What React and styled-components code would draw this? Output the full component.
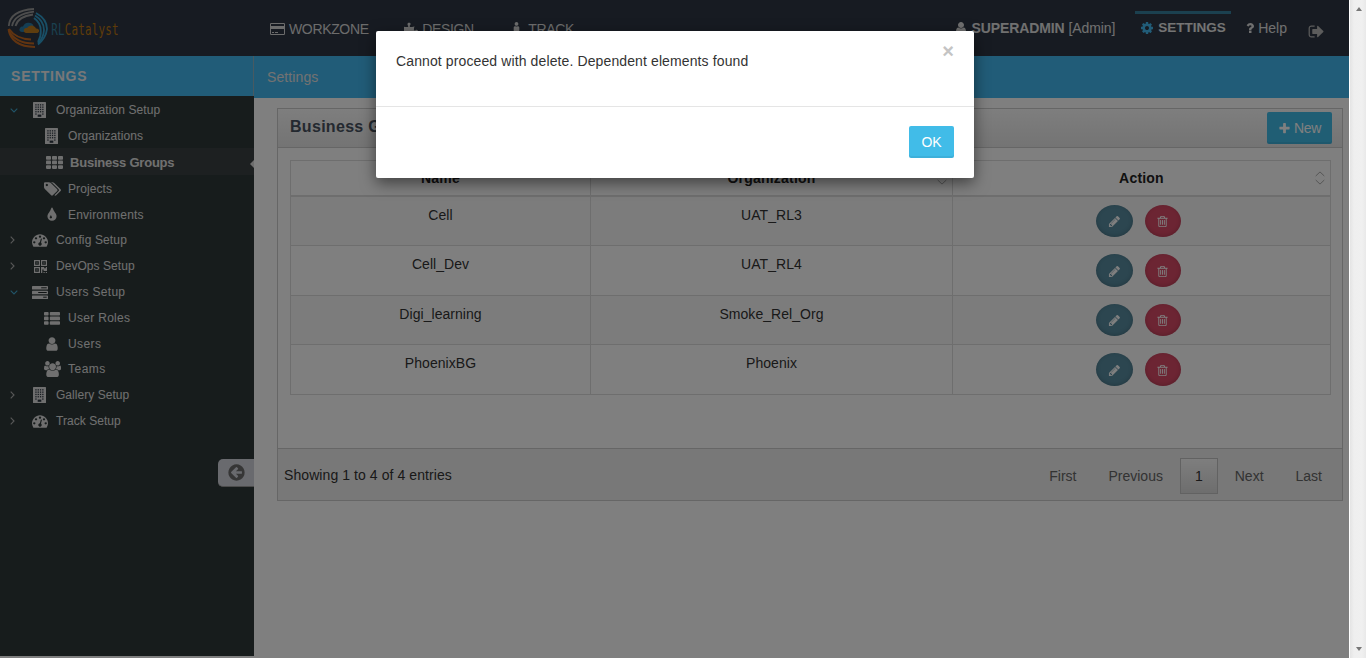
import React from "react";
import styled, { createGlobalStyle, css } from "styled-components";
import { FaPuzzlePiece, FaStreetView } from "react-icons/fa";

const GlobalStyle = createGlobalStyle`
  * { box-sizing: border-box; }
  html, body { margin: 0; padding: 0; height: 658px; overflow: hidden; background: #fff; }
  body { font-family: "Liberation Sans", Arial, sans-serif; font-size: 14px; line-height: 20px; color: #333; }
  button { font-family: inherit; }
`;

/* ---------- icons ---------- */
const Glyph = styled.svg`
  display: block;
  flex: none;
  fill: currentColor;
`;

const PATHS = {
  pencil: "M491 1536l91-91-235-235-91 91v107h128v128h107zm523-928q0-22-22-22-10 0-17 7l-542 542q-7 7-7 17 0 22 22 22 10 0 17-7l542-542q7-7 7-17zm-54-192l416 416-832 832h-416v-416zm683 96q0 53-37 90l-166 166-416-416 166-165q36-38 90-38 53 0 91 38l235 234q37 39 37 91z",
  trash: "M704 736v576q0 14-9 23t-23 9h-64q-14 0-23-9t-9-23v-576q0-14 9-23t23-9h64q14 0 23 9t9 23zm256 0v576q0 14-9 23t-23 9h-64q-14 0-23-9t-9-23v-576q0-14 9-23t23-9h64q14 0 23 9t9 23zm256 0v576q0 14-9 23t-23 9h-64q-14 0-23-9t-9-23v-576q0-14 9-23t23-9h64q14 0 23 9t9 23zm128 724v-948h-896v948q0 22 7 40.5t14.5 27 10.5 8.5h832q3 0 10.5-8.5t14.5-27 7-40.5zm-672-1076h448l-48-117q-7-9-17-11h-317q-10 2-17 11zm928 32v64q0 14-9 23t-23 9h-96v948q0 83-47 143.5t-113 60.5h-832q-66 0-113-58.5t-47-141.5v-952h-96q-14 0-23-9t-9-23v-64q0-14 9-23t23-9h309l70-167q15-37 54-63t79-26h320q40 0 79 26t54 63l70 167h309q14 0 23 9t9 23z",
  cog: "M1152 896q0-106-75-181t-181-75-181 75-75 181 75 181 181 75 181-75 75-181zm512-109v222q0 12-8 23t-20 13l-185 28q-19 54-39 91 35 50 107 138 10 12 10 25t-9 23q-27 37-99 108t-94 71q-12 0-26-9l-138-108q-44 23-91 38-16 136-29 186-7 28-36 28h-222q-14 0-24.5-8.5t-11.5-21.5l-28-184q-49-16-90-37l-141 107q-10 9-25 9-14 0-25-11-126-114-165-168-7-10-7-23 0-12 8-23 15-21 51-66.5t54-70.5q-27-50-41-99l-183-27q-13-2-21-12.5t-8-23.5v-222q0-12 8-23t19-13l186-28q14-46 39-92-40-57-107-138-10-12-10-24 0-10 9-23 26-36 98.5-107.5t94.5-71.5q13 0 26 10l138 107q44-23 91-38 16-136 29-186 7-28 36-28h222q14 0 24.5 8.5t11.5 21.5l28 184q49 16 90 37l142-107q9-9 24-9 13 0 25 10 129 119 165 170 7 8 7 22 0 12-8 23-15 21-51 66.5t-54 70.5q26 50 41 98l183 28q13 2 21 12.5t8 23.5z",
  signOut: "M704 1440q0 4 1 20t.5 26.5-3 23.5-10 19.5-20.5 6.5h-320q-119 0-203.5-84.5t-84.5-203.5v-704q0-119 84.5-203.5t203.5-84.5h320q13 0 22.5 9.5t9.5 22.5q0 4 1 20t.5 26.5-3 23.5-10 19.5-20.5 6.5h-320q-66 0-113 47t-47 113v704q0 66 47 113t113 47h312l11.5 1 11.5 3 8 5.5 7 9 2 13.5zm928-544q0 26-19 45l-544 544q-19 19-45 19t-45-19-19-45v-288h-448q-26 0-45-19t-19-45v-384q0-26 19-45t45-19h448v-288q0-26 19-45t45-19 45 19l544 544q19 19 19 45z",
  gauge: "M384 1152q0-53-37.5-90.5t-90.5-37.5-90.5 37.5-37.5 90.5 37.5 90.5 90.5 37.5 90.5-37.5 37.5-90.5zm192-448q0-53-37.5-90.5t-90.5-37.5-90.5 37.5-37.5 90.5 37.5 90.5 90.5 37.5 90.5-37.5 37.5-90.5zm428 481l101-382q6-26-7.5-48.5t-38.5-29.5-48 6.5-30 39.5l-101 382q-60 5-107 43.5t-63 98.5q-20 77 20 146t117 89 146-20 89-117q16-60-6-117t-72-91zm660-33q0-53-37.5-90.5t-90.5-37.5-90.5 37.5-37.5 90.5 37.5 90.5 90.5 37.5 90.5-37.5 37.5-90.5zm-640-640q0-53-37.5-90.5t-90.5-37.5-90.5 37.5-37.5 90.5 37.5 90.5 90.5 37.5 90.5-37.5 37.5-90.5zm448 192q0-53-37.5-90.5t-90.5-37.5-90.5 37.5-37.5 90.5 37.5 90.5 90.5 37.5 90.5-37.5 37.5-90.5zm320 448q0 261-141 483-19 29-54 29h-1402q-35 0-54-29-141-221-141-483 0-182 71-348t191-286 286-191 348-71 348 71 286 191 191 286 71 348z",
  tags: "M448 448q0-53-37.5-90.5t-90.5-37.5-90.5 37.5-37.5 90.5 37.5 90.5 90.5 37.5 90.5-37.5 37.5-90.5zm1067 576q0 53-37 90l-491 492q-39 37-91 37-53 0-90-37l-715-716q-38-37-64.5-101t-26.5-117v-416q0-52 38-90t90-38h416q53 0 117 26.5t102 64.5l715 714q37 39 37 91zm384 0q0 53-37 90l-491 492q-39 37-91 37-36 0-59-14t-53-45l470-470q37-37 37-90 0-52-37-91l-715-714q-38-38-102-64.5t-117-26.5h224q53 0 117 26.5t102 64.5l715 714q37 39 37 91z",
  tint: "M896 1152q0-36-20-69-1-1-15.5-22.5t-25.5-38-25-44-21-50.5q-4-16-21-16t-21 16q-7 23-21 50.5t-25 44-25.5 38-15.5 22.5q-20 33-20 69 0 53 37.5 90.5t90.5 37.5 90.5-37.5 37.5-90.5zm512-128q0 212-150 362t-362 150-362-150-150-362q0-145 81-275 6-9 62.5-90.5t101-151 99.5-178 83-201.5q9-30 34-47t51-17 51.5 17 33.5 47q28 93 83 201.5t99.5 178 101 151 62.5 90.5q81 127 81 275z",
  user: "M1536 1399q0 109-62.5 187t-150.5 78h-854q-88 0-150.5-78t-62.5-187q0-85 8.5-160.5t31.5-152 58.5-131 94-89 134.5-34.5q131 128 313 128t313-128q76 0 134.5 34.5t94 89 58.5 131 31.5 152 8.5 160.5zm-256-887q0 159-112.5 271.5t-271.5 112.5-271.5-112.5-112.5-271.5 112.5-271.5 271.5-112.5 271.5 112.5 112.5 271.5z",
  users: "M593 896q-162 5-265 128h-134q-82 0-138-40.5t-56-118.5q0-353 124-353 6 0 43.5 21t97.5 42.5 119 21.5q67 0 133-23-5 37-5 66 0 139 81 256zm1071 637q0 120-73 189.5t-194 69.5h-874q-121 0-194-69.5t-73-189.5q0-53 3.5-103.5t14-109 26.5-108.5 43-97.5 62-81 85.5-53.5 111.5-20q10 0 43 21.5t73 48 107 48 135 21.5 135-21.5 107-48 73-48 43-21.5q61 0 111.5 20t85.5 53.5 62 81 43 97.5 26.5 108.5 14 109 3.5 103.5zm-1024-1277q0 106-75 181t-181 75-181-75-75-181 75-181 181-75 181 75 75 181zm704 384q0 159-112.5 271.5t-271.5 112.5-271.5-112.5-112.5-271.5 112.5-271.5 271.5-112.5 271.5 112.5 112.5 271.5zm576 225q0 78-56 118.5t-138 40.5h-134q-103-123-265-128 81-117 81-256 0-29-5-66 66 23 133 23 59 0 119-21.5t97.5-42.5 43.5-21q124 0 124 353zm-128-609q0 106-75 181t-181 75-181-75-75-181 75-181 181-75 181 75 75 181z",
  back: "M1408 960v-128q0-26-19-45t-45-19h-502l189-189q19-19 19-45t-19-45l-91-91q-18-18-45-18t-45 18l-362 362-91 91q-18 18-18 45t18 45l91 91 362 362q18 18 45 18t45-18l91-91q18-18 18-45t-18-45l-189-189h502q26 0 45-19t19-45zm256-64q0 209-103 385.5t-279.5 279.5-385.5 103-385.5-103-279.5-279.5-103-385.5 103-385.5 279.5-279.5 385.5-103 385.5 103 279.5 279.5 103 385.5z",
  question: "M1088 1256v240q0 16-12 28t-28 12h-240q-16 0-28-12t-12-28v-240q0-16 12-28t28-12h240q16 0 28 12t12 28zm316-600q0 54-15.5 101t-35 76.5-55 59.5-57.5 43.5-61 35.5q-41 23-68.5 65t-27.5 67q0 17-12 32.5t-28 15.5h-240q-15 0-25.5-18.5t-10.5-37.5v-45q0-83 65-156.5t143-108.5q59-27 84-56t25-76q0-42-46.5-74t-107.5-32q-65 0-108 29-35 25-107 115-13 16-31 16-12 0-25-8l-164-125q-13-10-15.5-25t5.5-28q160-266 464-266 80 0 161 31t146 83 106 127.5 41 158.5z",
  plus: "M1600 736v192q0 40-28 68t-68 28h-416v416q0 40-28 68t-68 28h-192q-40 0-68-28t-28-68v-416h-416q-40 0-68-28t-28-68v-192q0-40 28-68t68-28h416v-416q0-40 28-68t68-28h192q40 0 68 28t28 68v416h416q40 0 68 28t28 68z",
};

const WIDE = { tags: 1920, users: 1920 };

function Icon({ name, size = 16 }) {
  const w = WIDE[name] || 1792;
  return (
    <Glyph width={(size * w) / 1792} height={size} viewBox={`0 0 ${w} 1792`}>
      <path d={PATHS[name]} />
    </Glyph>
  );
}

function BuildingIcon() {
  const windows = [];
  for (let r = 0; r < 5; r++)
    for (let c = 0; c < 4; c++)
      if (!(r === 4 && (c === 1 || c === 2)))
        windows.push(<rect key={`${r}-${c}`} x={2.3 + c * 2.3} y={2.2 + r * 2.3} width="1.3" height="1.3" fill="#2c3640" />);
  return (
    <Glyph width="13" height="16" viewBox="0 0 13 16">
      <rect width="13" height="16" rx=".6" />
      {windows}
      <rect x="4.7" y="12.6" width="3.6" height="2.2" fill="#2c3640" />
    </Glyph>
  );
}

function ThIcon() {
  return (
    <Glyph width="17" height="13" viewBox="0 0 17 13">
      {[0, 4.6, 9.2].map((y) => [0, 6, 12].map((x) => <rect key={`${x}-${y}`} x={x} y={y} width="5" height="3.7" rx=".8" />))}
    </Glyph>
  );
}

function ThListIcon() {
  return (
    <Glyph width="16" height="13" viewBox="0 0 16 13">
      {[0, 4.6, 9.2].map((y) => (
        <g key={y}>
          <rect y={y} width="4.6" height="3.6" rx=".8" />
          <rect x="5.8" y={y} width="10.2" height="3.6" rx=".8" />
        </g>
      ))}
    </Glyph>
  );
}

function ServerIcon() {
  return (
    <Glyph width="16" height="13" viewBox="0 0 16 13">
      {[0, 4.7, 9.4].map((y) => <rect key={y} y={y} width="16" height="3.6" rx=".6" />)}
      <g fill="#232b2b">
        <rect x="9.2" y="1.3" width="5.5" height="1" />
        <rect x="6.2" y="6" width="8.5" height="1" />
        <rect x="11.2" y="10.7" width="3.5" height="1" />
      </g>
    </Glyph>
  );
}

function QrIcon() {
  return (
    <Glyph width="13" height="13" viewBox="0 0 13 13">
      <path fillRule="evenodd" d="M0 0h6v6H0zM1.2 1.2v3.6h3.6V1.2zM7 0h6v6H7zM8.2 1.2v3.6h3.6V1.2zM0 7h6v6H0zM1.2 8.2v3.6h3.6V8.2zM2.4 2.4h1.2v1.2H2.4zM9.4 2.4h1.2v1.2H9.4zM2.4 9.4h1.2v1.2H2.4zM7 7h3.2v1.2h1.6V7H13v4h-3.4V9.6H8.3V13H7zM9.5 12h1.2v1H9.5zM11.8 12H13v1h-1.2z" />
    </Glyph>
  );
}

function CardIcon() {
  return (
    <Glyph width="15" height="12" viewBox="0 0 15 12">
      <path fillRule="evenodd" d="M1.2 0h12.6Q15 0 15 1.2v9.6Q15 12 13.800 12H1.200Q0 12 0 10.800V1.200Q0 0 1.200 0zM1 1v2h13V1zM1 6v5h13V6z" />
      <path d="M2 9h2v1H2zM5 9h3v1H5z" />
    </Glyph>
  );
}

const Stroke = styled.svg`
  display: block;
  flex: none;
  fill: none;
  stroke: currentColor;
`;

function Chevron({ open }) {
  return open ? (
    <Stroke width="8" height="5" viewBox="0 0 8 5"><path d="M.7.7 4 4 7.300.7" strokeWidth="1.100" /></Stroke>
  ) : (
    <Stroke width="5" height="8" viewBox="0 0 5 8"><path d="M.7.7 4 4 .7 7.300" strokeWidth="1.100" /></Stroke>
  );
}

function SortIcon() {
  return (
    <Stroke width="10" height="14" viewBox="0 0 10 14"><path d="M.7 5 5 .9 9.300 5M.7 9 5 13.100 9.300 9" /></Stroke>
  );
}

/* ---------- page frame ---------- */
const Page = styled.div`
  display: flex;
  width: 1366px;
  height: 658px;
  overflow: hidden;
`;
const Shell = styled.div`
  position: relative;
  display: flex;
  flex-direction: column;
  width: 1349px;
  height: 658px;
`;
const Scrollbar = styled.div`
  display: flex;
  flex-direction: column;
  justify-content: space-between;
  align-items: center;
  width: 17px;
  padding: 7px 0 7px 1px;
  border-left: 1px solid #fff;
  background: linear-gradient(90deg, #e4e4e4, #efefef 4px, #f0f0f0 12px, #e9e9e9);
`;
const Arrow = styled.i`
  width: 0;
  height: 0;
  border: 3.500px solid transparent;
  ${(p) => (p.$up ? css`border-top: 0; border-bottom: 4px solid #777;` : css`border-bottom: 0; border-top: 4px solid #777;`)}
`;

/* ---------- header ---------- */
const Header = styled.header`
  display: flex;
  flex: none;
  height: 56px;
  background: #2e3744;
  color: #e8e8e8;
`;
const LogoBox = styled.div`
  width: 270px;
  padding: 7px 0 0 7px;
`;
const Nav = styled.nav`
  display: flex;
  flex: 1;
  padding-top: 19px;
`;
const NavItem = styled.a`
  display: flex;
  align-items: center;
  gap: 4px;
  height: 20px;
  margin-right: ${(p) => p.$after || 0}px;
  color: #d8d8d8;
  white-space: nowrap;
  letter-spacing: -0.35px;
`;
const UserNav = styled.div`
  display: flex;
  align-items: flex-start;
  padding-right: 24px;
`;
const UserItem = styled.a`
  display: flex;
  align-items: center;
  gap: ${(p) => p.$gap || 4}px;
  margin: ${(p) => p.$m};
  height: 20px;
  white-space: nowrap;
  letter-spacing: ${(p) => p.$ls || 0}px;
  color: ${(p) => (p.$dim ? "#b8b8b8" : "#e0e0e0")};
`;
const SettingsTab = styled.a`
  display: flex;
  align-items: center;
  gap: 4px;
  width: 96px;
  height: 31px;
  margin: 11px 12px 0 20px;
  padding: 0 0 0 5px;
  border-top: 3px solid #36809f;
  font-size: 13.5px;
  font-weight: bold;
  letter-spacing: 0;
  color: #e8e8e8;
  svg { color: #42b8f0; }
`;

function Logo() {
  return (
    <svg width="115" height="44" viewBox="0 0 115 44" fill="none">
      <g stroke="#9b9b9b" strokeWidth="1.800">
        <path d="M1.800 19Q3 3.500 27 2" />
        <path d="M5 19Q7.500 7 27 4.700" />
        <path d="M8.500 19Q11 9.500 26 7.500" />
      </g>
      <g stroke="#329fce" strokeWidth="1.800">
        <path d="M29 6Q40 12 40 22 39 31 31 37.500" />
        <path d="M28 8.500Q37 14 37 23 36.500 31 31 36.500" />
        <path d="M27 11Q34 16 33.800 24 34 30 31 35" />
      </g>
      <g stroke="#c56820" strokeWidth="1.800">
        <path d="M1.500 22Q4 39.500 28 40" />
        <path d="M1.500 23Q8 36.500 27 36.500" />
        <path d="M2 22Q9 32 24 32.500" />
      </g>
      <path fill="#287ca9" d="M15 25q-4-1-2-4 1-1.800 3-1.400 1.500-4 5.500-3.800 4 0 5 3l-3 2-3 4z" />
      <path fill="#bd7b1d" d="M19 26q-3-1-2-3.600 1-1.800 3-1.300 2-3.600 6-2.400 2.500.8 3 2.900 2.300-.2 3 1.500.7 2.200-1.400 2.900z" />
      <text transform="translate(44.300 28) scale(.66 1)" fontFamily="DejaVu Sans Mono" fontSize="16.500" textLength="102" lengthAdjust="spacing" fill="#34809f">
        RL<tspan fill="#bd7713">Catalyst</tspan>
      </text>
    </svg>
  );
}

/* ---------- sidebar ---------- */
const Body = styled.div`
  display: flex;
  flex: 1;
`;
const Sidebar = styled.aside`
  display: flex;
  flex-direction: column;
  width: 254px;
  height: 600px;
  background: #2e3838;
`;
const SidebarTitle = styled.h2`
  height: 40px;
  margin: 0;
  padding-left: 11px;
  border-right: 1px solid #8fb4c4;
  background: #42b8f0;
  color: #f0f0f0;
  font-size: 14px;
  line-height: 40px;
  letter-spacing: 0.8px;
`;
const MenuRow = styled.div`
  display: flex;
  align-items: center;
  justify-content: space-between;
  height: ${(p) => p.$h || 26}px;
  padding: ${(p) => p.$drop || 0}px 0 0 9px;
  background: ${(p) => (p.$active ? "#3b4142" : "transparent")};
  color: #e0e0e0;
  font-size: ${(p) => (p.$active ? 13 : 12)}px;
  font-weight: ${(p) => (p.$active ? "bold" : "normal")};
  letter-spacing: ${(p) => p.$ls}px;
`;
const MenuMain = styled.div`
  display: flex;
  align-items: center;
`;
const Caret = styled.span`
  width: ${(p) => (p.$child ? 34 : 22)}px;
  padding-left: 1px;
  color: ${(p) => (p.$open ? "#42a8d0" : "#b0b0b0")};
`;
const MenuIcon = styled.span`
  display: flex;
  padding-left: ${(p) => p.$inset}px;
  width: ${(p) => (p.$active ? 22 : 18)}px;
  margin-right: ${(p) => (p.$active ? 5 : 7)}px;
  color: #dedede;
`;
const ActiveTip = styled.i`
  border: 4.500px solid transparent;
  border-left: 0;
  border-right-color: #ddd;
  margin-top: 2px;
`;
const Collapse = styled.button`
  align-self: flex-end;
  display: flex;
  justify-content: center;
  width: 36px;
  height: 28px;
  margin-top: 25px;
  padding: 4px 0 0;
  border: 0;
  border-bottom: 1px solid #999;
  border-radius: 5px 0 0 5px;
  background: #d2d4dc;
  color: #6d6d6d;
`;

const MENU = [
  { label: "Organization Setup", open: true, drop: 2, ls: 0.08, inset: 2, icon: <BuildingIcon /> },
  { label: "Organizations", child: true, drop: 2, ls: 0.07, inset: 2, icon: <BuildingIcon /> },
  { label: "Business Groups", child: true, active: true, h: 27, drop: 2, ls: -0.22, inset: 3, icon: <ThIcon /> },
  { label: "Projects", child: true, drop: 2, ls: 0.1, inset: 1, icon: <Icon name="tags" /> },
  { label: "Environments", child: true, drop: 2, ls: 0.2, inset: 1, icon: <Icon name="tint" /> },
  { label: "Config Setup", ls: 0.13, inset: 1, icon: <Icon name="gauge" /> },
  { label: "DevOps Setup", ls: 0.05, inset: 3, icon: <QrIcon /> },
  { label: "Users Setup", open: true, ls: 0.3, inset: 1, icon: <ServerIcon /> },
  { label: "User Roles", child: true, ls: 0.3, inset: 1, icon: <ThListIcon /> },
  { label: "Users", child: true, h: 25, ls: 0.4, inset: 1, icon: <Icon name="user" /> },
  { label: "Teams", child: true, ls: 0.5, inset: 1, icon: <Icon name="users" /> },
  { label: "Gallery Setup", ls: 0.04, inset: 2, icon: <BuildingIcon /> },
  { label: "Track Setup", ls: 0.05, inset: 1, icon: <Icon name="gauge" /> },
];

/* ---------- content ---------- */
const Main = styled.main`
  flex: 1;
  background: #fff;
`;
const Crumb = styled.div`
  height: 42px;
  padding-left: 13px;
  background: #42b8f0;
  color: #e4e4e4;
  line-height: 42px;
  letter-spacing: 0.1px;
`;
const Panel = styled.section`
  display: flex;
  flex-direction: column;
  width: 1066px;
  height: 393px;
  margin: 10px 0 0 23px;
  border: 1px solid #ccc;
`;
const PanelHead = styled.div`
  display: flex;
  justify-content: space-between;
  align-items: flex-start;
  height: 39px;
  padding: 3px 10px 0 12px;
  border-bottom: 1px solid #ccc;
  background: linear-gradient(#fcfcfc, #e8e8e8);
`;
const PanelTitle = styled.h3`
  margin: 0;
  color: #485260;
  font-size: 16px;
  line-height: 30px;
  letter-spacing: 0.3px;
`;
const Button = styled.button`
  display: flex;
  align-items: center;
  justify-content: center;
  gap: 3px;
  width: ${(p) => p.$w}px;
  height: 32px;
  padding: 0;
  border: 0;
  border-radius: 2px;
  background: #41bce8;
  box-shadow: inset 0 -2px 0 rgba(0, 0, 0, 0.06);
  color: #fff;
  font-size: 14px;
  letter-spacing: ${(p) => p.$ls || 0}px;
`;
const PanelBody = styled.div`
  flex: 1;
  padding: 12px 11px 0 12px;
`;
const Table = styled.div`
  width: 1041px;
  border: 1px solid #ddd;
  border-bottom: 0;
`;
const Row = styled.div`
  display: grid;
  grid-template-columns: 299px 362px 1fr;
  height: ${(p) => p.$h}px;
  border-bottom: ${(p) => (p.$head ? 2 : 1)}px solid #ddd;
  background: ${(p) => (p.$odd ? "#f9f9f9" : "#fff")};
  font-weight: ${(p) => (p.$head ? "bold" : "normal")};
`;
const Cell = styled.div`
  display: flex;
  justify-content: center;
  align-items: flex-start;
  padding-top: 8px;
  color: #333;
  letter-spacing: 0.05px;
  & + & { border-left: 1px solid #ddd; }
`;
const HeadCell = styled(Cell)`
  display: grid;
  grid-template-columns: 15px 1fr 15px;
  align-items: center;
  padding: 0;
  color: #222;
  text-align: center;
  letter-spacing: 0.2px;
  svg { color: #aaa; }
  span { grid-column: 2; }
`;
const Actions = styled(Cell)`
  gap: 12px;
  padding-right: 7px;
`;
const RoundButton = styled.button`
  display: flex;
  align-items: center;
  justify-content: center;
  width: ${(p) => (p.$danger ? 36 : 37)}px;
  height: ${(p) => p.$h}px;
  padding: 1px 0 0;
  border: 0;
  border-radius: 50%;
  background: ${(p) => (p.$danger ? "#d94a66" : "#588ca0")};
  box-shadow: inset 0 -1px 4px rgba(0, 0, 0, 0.18);
  color: #fff;
`;
const PanelFoot = styled.div`
  display: flex;
  justify-content: space-between;
  align-items: center;
  height: 52px;
  padding: 1px 5px 0 6px;
  border-top: 1px solid #ccc;
  background: #f0f0f0;
  letter-spacing: 0.08px;
`;
const Pager = styled.div`
  display: flex;
  padding-top: 2px;
  letter-spacing: 0;
`;
const PageLink = styled.a`
  height: 36px;
  margin-left: 2px;
  padding: 0 ${(p) => (p.$current ? 14 : 15)}px;
  border: ${(p) => (p.$current ? "1px solid #c4c4c4" : "0")};
  background: ${(p) => (p.$current ? "linear-gradient(#fcfcfc, #dcdcdc)" : "none")};
  color: ${(p) => (p.$current ? "#333" : "#666")};
  line-height: ${(p) => (p.$current ? 34 : 36)}px;
`;

/* ---------- dialog ---------- */
const Backdrop = styled.div`
  position: absolute;
  inset: 0;
  background: rgba(0, 0, 0, 0.5);
`;
const Dialog = styled.div`
  position: absolute;
  top: 31px;
  left: 376px;
  width: 598px;
  height: 147px;
  border-radius: 2px;
  background: #fff;
  box-shadow: 0 5px 15px rgba(0, 0, 0, 0.5);
`;
const DialogBody = styled.div`
  display: flex;
  justify-content: space-between;
  height: 76px;
  padding: 20px;
  border-bottom: 1px solid #e5e5e5;
  letter-spacing: 0.115px;
`;
const Close = styled.span`
  margin-top: -10px;
  color: #c4c4c4;
  font-size: 20px;
  font-weight: bold;
`;
const DialogFoot = styled.div`
  display: flex;
  justify-content: flex-end;
  padding: 19px 20px 0;
`;

const ROWS = [
  ["Cell", "UAT_RL3", 49],
  ["Cell_Dev", "UAT_RL4", 50],
  ["Digi_learning", "Smoke_Rel_Org", 49],
  ["PhoenixBG", "Phoenix", 50],
];

export default function App() {
  return (
    <>
      <GlobalStyle />
      <Page>
        <Shell>
          <Header>
            <LogoBox><Logo /></LogoBox>
            <Nav>
              <NavItem $after={35.5}><CardIcon />WORKZONE</NavItem>
              <NavItem $after={35.5}><FaPuzzlePiece size={14} />DESIGN</NavItem>
              <NavItem><FaStreetView size={15} />TRACK</NavItem>
            </Nav>
            <UserNav>
              <UserItem $m="18px 0 0" $ls={-0.1}><Icon name="user" size={14} /><span><b>SUPERADMIN</b> [Admin]</span></UserItem>
              <SettingsTab><Icon name="cog" size={14} />SETTINGS</SettingsTab>
              <UserItem $m="18px 0 0" $gap={1}><Icon name="question" size={14} />Help</UserItem>
              <UserItem $m="21px 0 0 21px" $dim><Icon name="signOut" size={17} /></UserItem>
            </UserNav>
          </Header>
          <Body>
            <Sidebar>
              <SidebarTitle>SETTINGS</SidebarTitle>
              {MENU.map((m) => (
                <MenuRow key={m.label} $h={m.h} $active={m.active} $drop={m.drop} $ls={m.ls}>
                  <MenuMain>
                    <Caret $child={m.child} $open={m.open}>{!m.child && <Chevron open={m.open} />}</Caret>
                    <MenuIcon $active={m.active} $inset={m.inset}>{m.icon}</MenuIcon>
                    {m.label}
                  </MenuMain>
                  {m.active && <ActiveTip />}
                </MenuRow>
              ))}
              <Collapse><Icon name="back" size={19} /></Collapse>
            </Sidebar>
            <Main>
              <Crumb>Settings</Crumb>
              <Panel>
                <PanelHead>
                  <PanelTitle>Business Groups</PanelTitle>
                  <Button $w={65} $ls={-0.4}><Icon name="plus" size={13} />New</Button>
                </PanelHead>
                <PanelBody>
                  <Table>
                    <Row $head $h={36}>
                      {["Name", "Organization", "Action"].map((h, i) => (
                        <HeadCell key={h}><span>{h}</span>{i > 0 && <SortIcon />}</HeadCell>
                      ))}
                    </Row>
                    {ROWS.map(([name, org, h], i) => (
                      <Row key={name} $h={h} $odd={i % 2 === 0}>
                        <Cell>{name}</Cell>
                        <Cell>{org}</Cell>
                        <Actions>
                          <RoundButton $h={h - 17}><Icon name="pencil" size={13} /></RoundButton>
                          <RoundButton $h={h - 17} $danger><Icon name="trash" size={13} /></RoundButton>
                        </Actions>
                      </Row>
                    ))}
                  </Table>
                </PanelBody>
                <PanelFoot>
                  <span>Showing 1 to 4 of 4 entries</span>
                  <Pager>
                    <PageLink>First</PageLink>
                    <PageLink>Previous</PageLink>
                    <PageLink $current>1</PageLink>
                    <PageLink>Next</PageLink>
                    <PageLink>Last</PageLink>
                  </Pager>
                </PanelFoot>
              </Panel>
            </Main>
          </Body>
          <Backdrop />
          <Dialog>
            <DialogBody>
              <span>Cannot proceed with delete. Dependent elements found</span>
              <Close>×</Close>
            </DialogBody>
            <DialogFoot><Button $w={45}>OK</Button></DialogFoot>
          </Dialog>
        </Shell>
        <Scrollbar><Arrow $up /><Arrow /></Scrollbar>
      </Page>
    </>
  );
}
